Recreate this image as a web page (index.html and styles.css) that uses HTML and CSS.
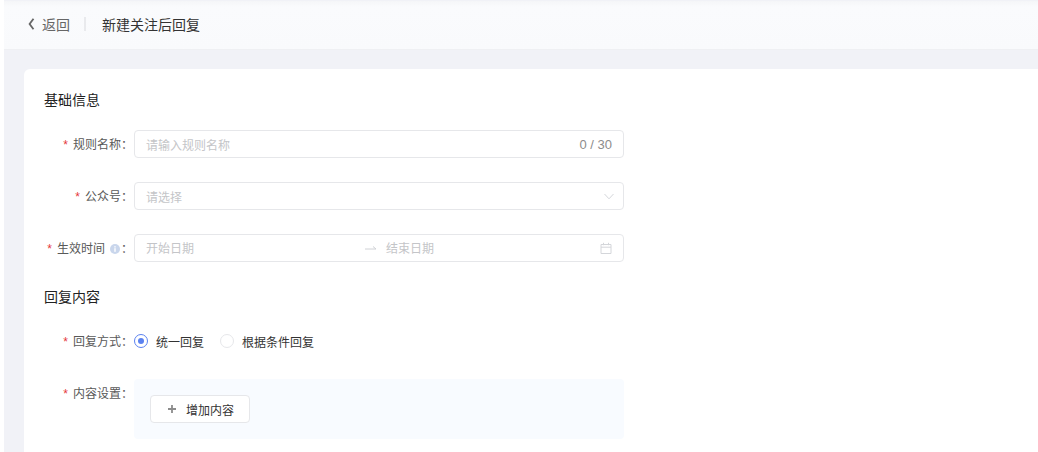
FILE: index.html
```html
<!DOCTYPE html>
<html lang="zh-CN">
<head>
<meta charset="utf-8">
<title>新建关注后回复</title>
<link rel="stylesheet" href="styles.css">
</head>
<body>
<div class="page">
  <header class="topbar">
    <svg class="back-icon" width="8" height="12" viewBox="0 0 8 12"><path d="M6.5.8 2.6 6l3.9 5.2" fill="none" stroke="#666" stroke-width="1.8"/></svg>
    <span class="back">返回</span>
    <span class="sep"></span>
    <span class="title">新建关注后回复</span>
  </header>
  <main class="card">
    <h2 class="section">基础信息</h2>
    <div class="row first">
      <div class="label"><i>*</i>规则名称：</div>
      <div class="field"><span class="ph grow">请输入规则名称</span><span class="count">0 / 30</span></div>
    </div>
    <div class="row">
      <div class="label"><i>*</i>公众号：</div>
      <div class="field"><span class="ph grow">请选择</span>
        <svg class="chev" width="10" height="7" viewBox="0 0 10 7"><path d="M.5 1 5 5.8 9.5 1" fill="none" stroke="#d4d6da" stroke-width="1"/></svg>
      </div>
    </div>
    <div class="row">
      <div class="label"><i>*</i>生效时间
        <svg class="info" width="10" height="10" viewBox="0 0 10 10"><circle cx="5" cy="5" r="5" fill="#c9d6ec"/><rect x="4.3" y="4.2" width="1.4" height="3.6" fill="#fff"/><rect x="4.3" y="2.2" width="1.4" height="1.3" fill="#fff"/></svg>：</div>
      <div class="field">
        <span class="ph date">开始日期</span>
        <svg class="arrow" width="12" height="6" viewBox="0 0 12 6"><path d="M0 4h11L8 1.5" fill="none" stroke="#d0d2d6" stroke-width="1"/></svg>
        <span class="ph date-end grow">结束日期</span>
        <svg class="cal" width="12" height="12" viewBox="0 0 12 12"><path d="M1 2.5h10v9H1zM1 5.2h10M3.5.8v2.4M8.5.8v2.4" fill="none" stroke="#d4d6da" stroke-width="1"/></svg>
      </div>
    </div>
    <h2 class="section second">回复内容</h2>
    <div class="row radio-row">
      <div class="label"><i>*</i>回复方式：</div>
      <div class="radios">
        <span class="radio on"></span><span class="radio-text">统一回复</span>
        <span class="radio"></span><span class="radio-text">根据条件回复</span>
      </div>
    </div>
    <div class="row content-row">
      <div class="label"><i>*</i>内容设置：</div>
      <div class="content-box">
        <button class="add" type="button">
          <svg width="8" height="8" viewBox="0 0 8 8"><path d="M4 0v8M0 4h8" stroke="#8c8c8c" stroke-width="1.8"/></svg>
          增加内容
        </button>
      </div>
    </div>
  </main>
</div>
</body>
</html>
```
FILE: styles.css
```css
* { box-sizing: border-box; }
html, body { margin: 0; height: 100%; overflow: hidden; background: #fff; }
body {
  font-family: "Liberation Sans", "Noto Sans CJK SC", sans-serif;
  font-size: 12px;
  color: #333;
}
.page {
  margin-left: 4px;
  height: 452px;
  padding-top: 1px;
  background: #f1f2f7;
  display: flex;
  flex-direction: column;
}
.topbar {
  height: 49px;
  flex: none;
  padding: 0 0 3px 23px;
  display: flex;
  align-items: center;
  background: linear-gradient(#f5f6f8, #fafbfd 6px, #f9fafc);
  border-bottom: 1px solid #eff0f3;
  font-size: 14px;
}
.back-icon { margin-right: 7px; }
.back { color: #666; }
.sep { width: 2px; height: 14px; background: #e9eaed; margin: 0 16px 0 14px; }
.title { color: #333; }
.card {
  margin: 19px 0 0 20px;
  flex: 1;
  background: #fff;
  border-radius: 6px 0 0 0;
  padding: 22px 0 0 20px;
}
.section { margin: 0; font-size: 14px; line-height: 18px; font-weight: 400; color: #222; }
.section.second { margin-top: 26px; }
.row { display: flex; align-items: center; margin-top: 24px; }
.row.first { margin-top: 21px; }
.label {
  width: 90px;
  flex: none;
  padding: 1px 1px 0 0;
  white-space: nowrap;
  color: #595959;
  display: flex;
  justify-content: flex-end;
  align-items: center;
  line-height: 16px;
}
.label i { font-style: normal; color: #e5383b; margin-right: 5px; }
.info { margin: 0 1px 0 5px; }
.field {
  width: 490px;
  height: 28px;
  border: 1px solid #e6e7ea;
  border-radius: 4px;
  padding: 0 10px 0 11px;
  display: flex;
  align-items: center;
  background: #fff;
}
.ph { color: #c4c5c8; white-space: nowrap; }
.grow { flex: 1; }
.count { color: #8c8c8c; font-size: 13px; margin-right: 1px; }
.date { width: 219px; margin-top: -1px; }
.date-end { margin-top: -1px; }
.arrow { margin-right: 9px; }
.chev { margin-right: -1px; }
.cal { margin-left: -1px; margin-right: 1px; }
.radio-row { margin-top: 27px; height: 16px; }
.radios { display: flex; align-items: center; }
.radio {
  width: 14px;
  height: 14px;
  border-radius: 50%;
  border: 1px solid #e6e7ea;
  background: #fff;
  margin-left: 16px;
  display: flex;
  align-items: center;
  justify-content: center;
}
.radio:first-child { margin-left: 0; }
.radio.on { border-color: #5b82f0; }
.radio.on::after { content: ""; width: 6px; height: 6px; border-radius: 50%; background: #5b82f0; }
.radio-text { margin-left: 8px; color: #333; }
.content-row { align-items: flex-start; margin-top: 30px; }
.content-row .label { margin-top: 6px; }
.content-box {
  width: 490px;
  height: 60px;
  padding: 16px;
  background: #f8fbff;
  border-radius: 4px;
}
.add {
  width: 100px;
  height: 28px;
  padding: 0 0 0 2px;
  border: 1px solid #e6e7ea;
  border-radius: 4px;
  background: #fff;
  color: #333;
  font: inherit;
  display: flex;
  align-items: center;
  justify-content: center;
  gap: 10px;
}
```
